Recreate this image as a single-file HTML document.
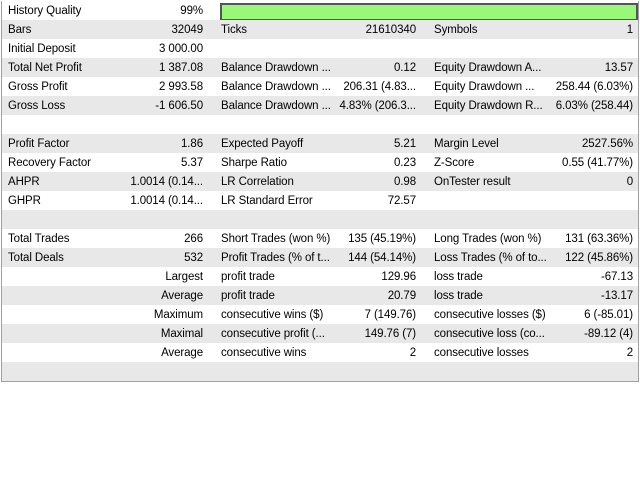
<!DOCTYPE html>
<html><head><style>
body{margin:0;width:640px;height:480px;background:#fff;font-family:"Liberation Sans",sans-serif;font-size:11.5px;color:#000;position:relative;overflow:hidden}
#t{position:absolute;left:1px;top:1px;width:636px;height:380px;border-left:1px solid #a0a0a0;border-right:1px solid #a0a0a0;border-bottom:1px solid #a0a0a0}
.r{position:absolute;left:0;width:636px;height:19px;line-height:21px}
.g{background:#e8e8e8}
.r span{position:absolute;white-space:nowrap;letter-spacing:-0.1px}
.l1{left:6px}.v1{right:435px}.l2{left:219px}.v2{right:222px}.l3{left:432px}.v3{right:5px}
.bar{position:absolute;left:218px;top:2px;width:414px;height:14px;background:#98f878;border:2px solid #555}
</style></head><body><div id="t">
<div class="r" style="top:0"><span class="l1">History Quality</span><span class="v1">99%</span><div class="bar"></div></div>
<div class="r g" style="top:19px"><span class="l1">Bars</span><span class="v1">32049</span><span class="l2">Ticks</span><span class="v2">21610340</span><span class="l3">Symbols</span><span class="v3">1</span></div>
<div class="r" style="top:38px"><span class="l1">Initial Deposit</span><span class="v1">3 000.00</span></div>
<div class="r g" style="top:57px"><span class="l1">Total Net Profit</span><span class="v1">1 387.08</span><span class="l2">Balance Drawdown ...</span><span class="v2">0.12</span><span class="l3">Equity Drawdown A...</span><span class="v3">13.57</span></div>
<div class="r" style="top:76px"><span class="l1">Gross Profit</span><span class="v1">2 993.58</span><span class="l2">Balance Drawdown ...</span><span class="v2">206.31 (4.83...</span><span class="l3">Equity Drawdown ...</span><span class="v3">258.44 (6.03%)</span></div>
<div class="r g" style="top:95px"><span class="l1">Gross Loss</span><span class="v1">-1 606.50</span><span class="l2">Balance Drawdown ...</span><span class="v2">4.83% (206.3...</span><span class="l3">Equity Drawdown R...</span><span class="v3">6.03% (258.44)</span></div>
<div class="r" style="top:114px"></div>
<div class="r g" style="top:133px"><span class="l1">Profit Factor</span><span class="v1">1.86</span><span class="l2">Expected Payoff</span><span class="v2">5.21</span><span class="l3">Margin Level</span><span class="v3">2527.56%</span></div>
<div class="r" style="top:152px"><span class="l1">Recovery Factor</span><span class="v1">5.37</span><span class="l2">Sharpe Ratio</span><span class="v2">0.23</span><span class="l3">Z-Score</span><span class="v3">0.55 (41.77%)</span></div>
<div class="r g" style="top:171px"><span class="l1">AHPR</span><span class="v1">1.0014 (0.14...</span><span class="l2">LR Correlation</span><span class="v2">0.98</span><span class="l3">OnTester result</span><span class="v3">0</span></div>
<div class="r" style="top:190px"><span class="l1">GHPR</span><span class="v1">1.0014 (0.14...</span><span class="l2">LR Standard Error</span><span class="v2">72.57</span></div>
<div class="r g" style="top:209px"></div>
<div class="r" style="top:228px"><span class="l1">Total Trades</span><span class="v1">266</span><span class="l2">Short Trades (won %)</span><span class="v2">135 (45.19%)</span><span class="l3">Long Trades (won %)</span><span class="v3">131 (63.36%)</span></div>
<div class="r g" style="top:247px"><span class="l1">Total Deals</span><span class="v1">532</span><span class="l2">Profit Trades (% of t...</span><span class="v2">144 (54.14%)</span><span class="l3">Loss Trades (% of to...</span><span class="v3">122 (45.86%)</span></div>
<div class="r" style="top:266px"><span class="v1">Largest</span><span class="l2">profit trade</span><span class="v2">129.96</span><span class="l3">loss trade</span><span class="v3">-67.13</span></div>
<div class="r g" style="top:285px"><span class="v1">Average</span><span class="l2">profit trade</span><span class="v2">20.79</span><span class="l3">loss trade</span><span class="v3">-13.17</span></div>
<div class="r" style="top:304px"><span class="v1">Maximum</span><span class="l2">consecutive wins ($)</span><span class="v2">7 (149.76)</span><span class="l3">consecutive losses ($)</span><span class="v3">6 (-85.01)</span></div>
<div class="r g" style="top:323px"><span class="v1">Maximal</span><span class="l2">consecutive profit (...</span><span class="v2">149.76 (7)</span><span class="l3">consecutive loss (co...</span><span class="v3">-89.12 (4)</span></div>
<div class="r" style="top:342px"><span class="v1">Average</span><span class="l2">consecutive wins</span><span class="v2">2</span><span class="l3">consecutive losses</span><span class="v3">2</span></div>
<div class="r g" style="top:361px"></div>
</div></body></html>
